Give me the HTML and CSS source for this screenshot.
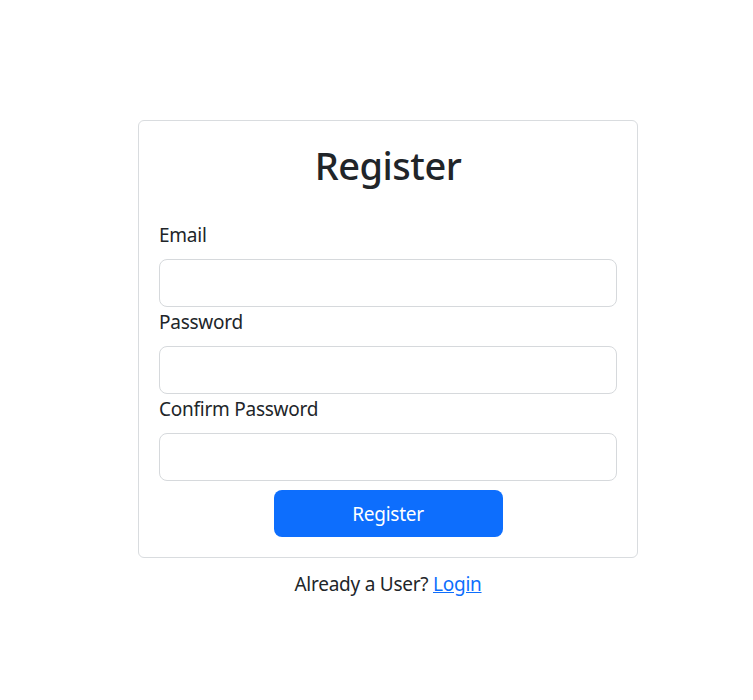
FILE: index.html
```html
<!DOCTYPE html>
<html lang="en">
<head>
<meta charset="utf-8">
<title>Register</title>
<link rel="stylesheet" href="styles.css">
</head>
<body>
<main class="page">
  <div class="card">
    <h1 class="title">Register</h1>
    <form class="form">
      <label class="label" for="email">Email</label>
      <input class="input" id="email" type="email">
      <label class="label" for="password">Password</label>
      <input class="input" id="password" type="password">
      <label class="label" for="confirm">Confirm Password</label>
      <input class="input" id="confirm" type="password">
      <button class="btn" type="button">Register</button>
    </form>
  </div>
  <p class="footer">Already a User? <a href="#" class="link">Login</a></p>
</main>
</body>
</html>
```

FILE: styles.css
```css
* { box-sizing: border-box; }
html, body { margin: 0; padding: 0; background: #fff; }
body {
  font-family: "Noto Sans", "Open Sans", "Liberation Sans", sans-serif;
  color: #212529;
}
.page {
  width: 500px;
  margin: 120px 0 0 138px;
}
.card {
  border: 1px solid #d9dcdf;
  border-radius: 6px;
  padding: 20px;
  display: flex;
  flex-direction: column;
}
.title {
  margin: 0 0 31px;
  font-size: 38px;
  letter-spacing: -0.5px;
  font-weight: 500;
  line-height: 48px;
  text-align: center;
}
.form {
  display: flex;
  flex-direction: column;
}
.label {
  font-size: 19px;
  letter-spacing: -0.25px;
  line-height: 30px;
  margin-bottom: 9px;
}
.input {
  height: 48px;
  border: 1px solid #d6d9dc;
  border-radius: 8px;
  font: inherit;
  padding: 8px 16px;
}
.btn {
  align-self: center;
  margin-top: 9px;
  width: 229px;
  height: 47px;
  border: none;
  border-radius: 8px;
  background: #0d6efd;
  color: #fff;
  font-family: inherit;
  font-size: 19px;
  letter-spacing: -0.25px;
  line-height: 30px;
}
.footer {
  margin: 11px 0 0;
  text-align: center;
  font-size: 19px;
  letter-spacing: -0.25px;
  line-height: 30px;
}
.link { color: #0d6efd; }
```
